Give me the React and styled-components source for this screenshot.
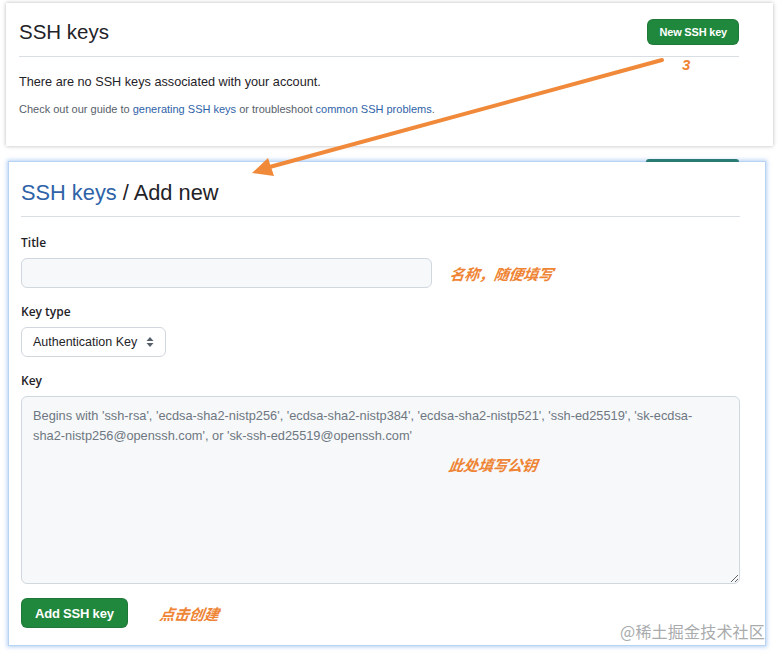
import React from "react";
import styled, { createGlobalStyle } from "styled-components";

const Global = createGlobalStyle`
  html, body { margin: 0; padding: 0; background: #ffffff; }
  body { font-family: "Liberation Sans", Arial, sans-serif; color: #1f2328; }
  * { box-sizing: border-box; }
`;

const Page = styled.div`
  position: relative;
  width: 784px;
  height: 661px;
  padding-top: 3px;
  overflow: hidden;
`;

const TopCard = styled.section`
  margin-left: 6px;
  width: 767px;
  height: 143px;
  background: #fff;
  box-shadow: 0 0 4px rgba(0, 0, 0, 0.28);
  padding: 16px 34px 0 13px;
`;

const Header = styled.div`
  display: flex;
  align-items: center;
  justify-content: space-between;
  height: 25px;
  padding-bottom: 12px;
  border-bottom: 1px solid #d8dee4;
  box-sizing: content-box;
`;

const H2 = styled.h2`
  margin: 0;
  font-weight: 400;
  font-size: ${(p) => p.$size || 22}px;
  line-height: 30px;
  color: #1f2328;
`;

const Crumb = styled.a`
  color: #2f63a8;
  text-decoration: none;
`;

const GreenButton = styled.button`
  border: 1px solid rgba(31, 35, 40, 0.15);
  background: #1f883d;
  color: #fff;
  font-family: "Liberation Sans", Arial, sans-serif;
  font-weight: 700;
  font-size: ${(p) => p.$fs}px;
  height: ${(p) => p.$h}px;
  padding: 0 ${(p) => p.$px}px;
  border-radius: 6px;
  display: inline-flex;
  align-items: center;
  justify-content: center;
  letter-spacing: -0.2px;
`;

const Lead = styled.p`
  margin: 16px 0 0;
  font-size: 12.7px;
  line-height: 18px;
  color: #1f2328;
`;

const Note = styled.p`
  margin: 10px 0 0;
  font-size: 11px;
  line-height: 16px;
  color: #57606a;
`;

const Link = styled.a`
  color: #2f63a8;
  text-decoration: none;
`;

const FormCard = styled.section`
  position: relative;
  margin: 15px 0 0 8px;
  width: 758px;
  height: 485px;
  background: #fff;
  border: 1px solid #b9d3f3;
  box-shadow: 0 0 4px 1px rgba(120, 170, 235, 0.55);
  padding: 16px 25px 0 12px;
`;

const PeekButton = styled.div`
  position: absolute;
  top: -3px;
  left: 637px;
  width: 93px;
  height: 3px;
  border-radius: 3px 3px 0 0;
  background: #2b7b75;
`;

const FormHeader = styled.div`
  padding-bottom: 8px;
  border-bottom: 1px solid #d8dee4;
`;

const Label = styled.label`
  display: block;
  margin: ${(p) => p.$mt}px 0 6px;
  font-family: "Open Sans", "Liberation Sans", sans-serif;
  font-weight: 600;
  font-size: 12px;
  line-height: 18px;
  color: #1f2328;
`;

const Row = styled.div`
  display: flex;
  align-items: center;
  gap: ${(p) => p.$gap}px;
`;

const TextInput = styled.input`
  width: 411px;
  height: 30px;
  border: 1px solid #d0d7de;
  border-radius: 6px;
  background: #f6f8fa;
  outline: none;
`;

const Annot = styled.span`
  font-family: "Noto Sans CJK SC", sans-serif;
  font-weight: 700;
  font-style: italic;
  font-size: 15px;
  color: #ee8434;
  transform: skewX(-8deg);
  display: inline-block;
  letter-spacing: -0.3px;
`;

const Select = styled.div`
  display: inline-flex;
  align-items: center;
  gap: 8px;
  height: 30px;
  width: 145px;
  padding: 0 6px 0 11px;
  border: 1px solid #d0d7de;
  border-radius: 6px;
  background: #fff;
  font-family: "Liberation Sans", Arial, sans-serif;
  font-size: 12.5px;
  color: #1f2328;
`;

const TextAreaWrap = styled.div`
  position: relative;
`;

const KeyArea = styled.textarea`
  display: block;
  width: 719px;
  height: 188px;
  border: 1px solid #d0d7de;
  border-radius: 6px;
  background: #f6f8fa;
  padding: 9px 24px 9px 11px;
  font-family: "Liberation Sans", Arial, sans-serif;
  font-size: 12.8px;
  line-height: 20px;
  outline: none;
  resize: vertical;
  &::placeholder { color: #6e7781; }
`;

const AreaAnnot = styled(Annot)`
  position: absolute;
  left: 428px;
  top: 58px;
`;

const Footer = styled(Row)`
  margin-top: 14px;
`;

const Watermark = styled.div`
  position: absolute;
  right: 0px;
  bottom: 2px;
  font-family: "Noto Sans CJK SC", sans-serif;
  font-size: 16px;
  color: #a9abad;
  letter-spacing: 0.2px;
`;

const Overlay = styled.svg`
  position: absolute;
  left: 0;
  top: 0;
  pointer-events: none;
`;

const Three = styled.span`
  position: absolute;
  left: 682px;
  top: 56px;
  font-family: "Liberation Sans", Arial, sans-serif;
  font-weight: 700;
  font-style: italic;
  font-size: 15px;
  color: #ee8434;
`;

function SortIcon() {
  return (
    <svg width="10" height="12" viewBox="0 0 10 12">
      <path d="M5 1 L8.5 5 H1.5 Z" fill="#57606a" />
      <path d="M5 11 L8.5 7 H1.5 Z" fill="#57606a" />
    </svg>
  );
}

export default function App() {
  return (
    <Page>
      <Global />
      <TopCard>
        <Header>
          <H2 $size={20.5}>SSH keys</H2>
          <GreenButton $fs={11} $h={26} $px={11}>New SSH key</GreenButton>
        </Header>
        <Lead>There are no SSH keys associated with your account.</Lead>
        <Note>
          Check out our guide to <Link>generating SSH keys</Link> or troubleshoot{" "}
          <Link>common SSH problems</Link>.
        </Note>
      </TopCard>

      <FormCard>
        <PeekButton />
        <FormHeader>
          <H2 $size={21.8}>
            <Crumb>SSH keys</Crumb> / Add new
          </H2>
        </FormHeader>

        <Label $mt={17}>Title</Label>
        <Row $gap={18}>
          <TextInput />
          <Annot>名称，随便填写</Annot>
        </Row>

        <Label $mt={15}>Key type</Label>
        <Select>
          <span>Authentication Key</span>
          <SortIcon />
        </Select>

        <Label $mt={15}>Key</Label>
        <TextAreaWrap>
          <KeyArea placeholder="Begins with 'ssh-rsa', 'ecdsa-sha2-nistp256', 'ecdsa-sha2-nistp384', 'ecdsa-sha2-nistp521', 'ssh-ed25519', 'sk-ecdsa-sha2-nistp256@openssh.com', or 'sk-ssh-ed25519@openssh.com'" />
          <AreaAnnot>此处填写公钥</AreaAnnot>
        </TextAreaWrap>

        <Footer $gap={32}>
          <GreenButton $fs={13} $h={30} $px={13}>Add SSH key</GreenButton>
          <Annot>点击创建</Annot>
        </Footer>

        <Watermark>@稀土掘金技术社区</Watermark>
      </FormCard>

      <Overlay width="784" height="661" viewBox="0 0 784 661">
        <line x1="662" y1="60" x2="266" y2="168" stroke="#f08a3a" strokeWidth="4" strokeLinecap="round" />
        <path d="M252 173 L268 158 L274 176 Z" fill="#f08a3a" />
      </Overlay>
      <Three>3</Three>
    </Page>
  );
}
